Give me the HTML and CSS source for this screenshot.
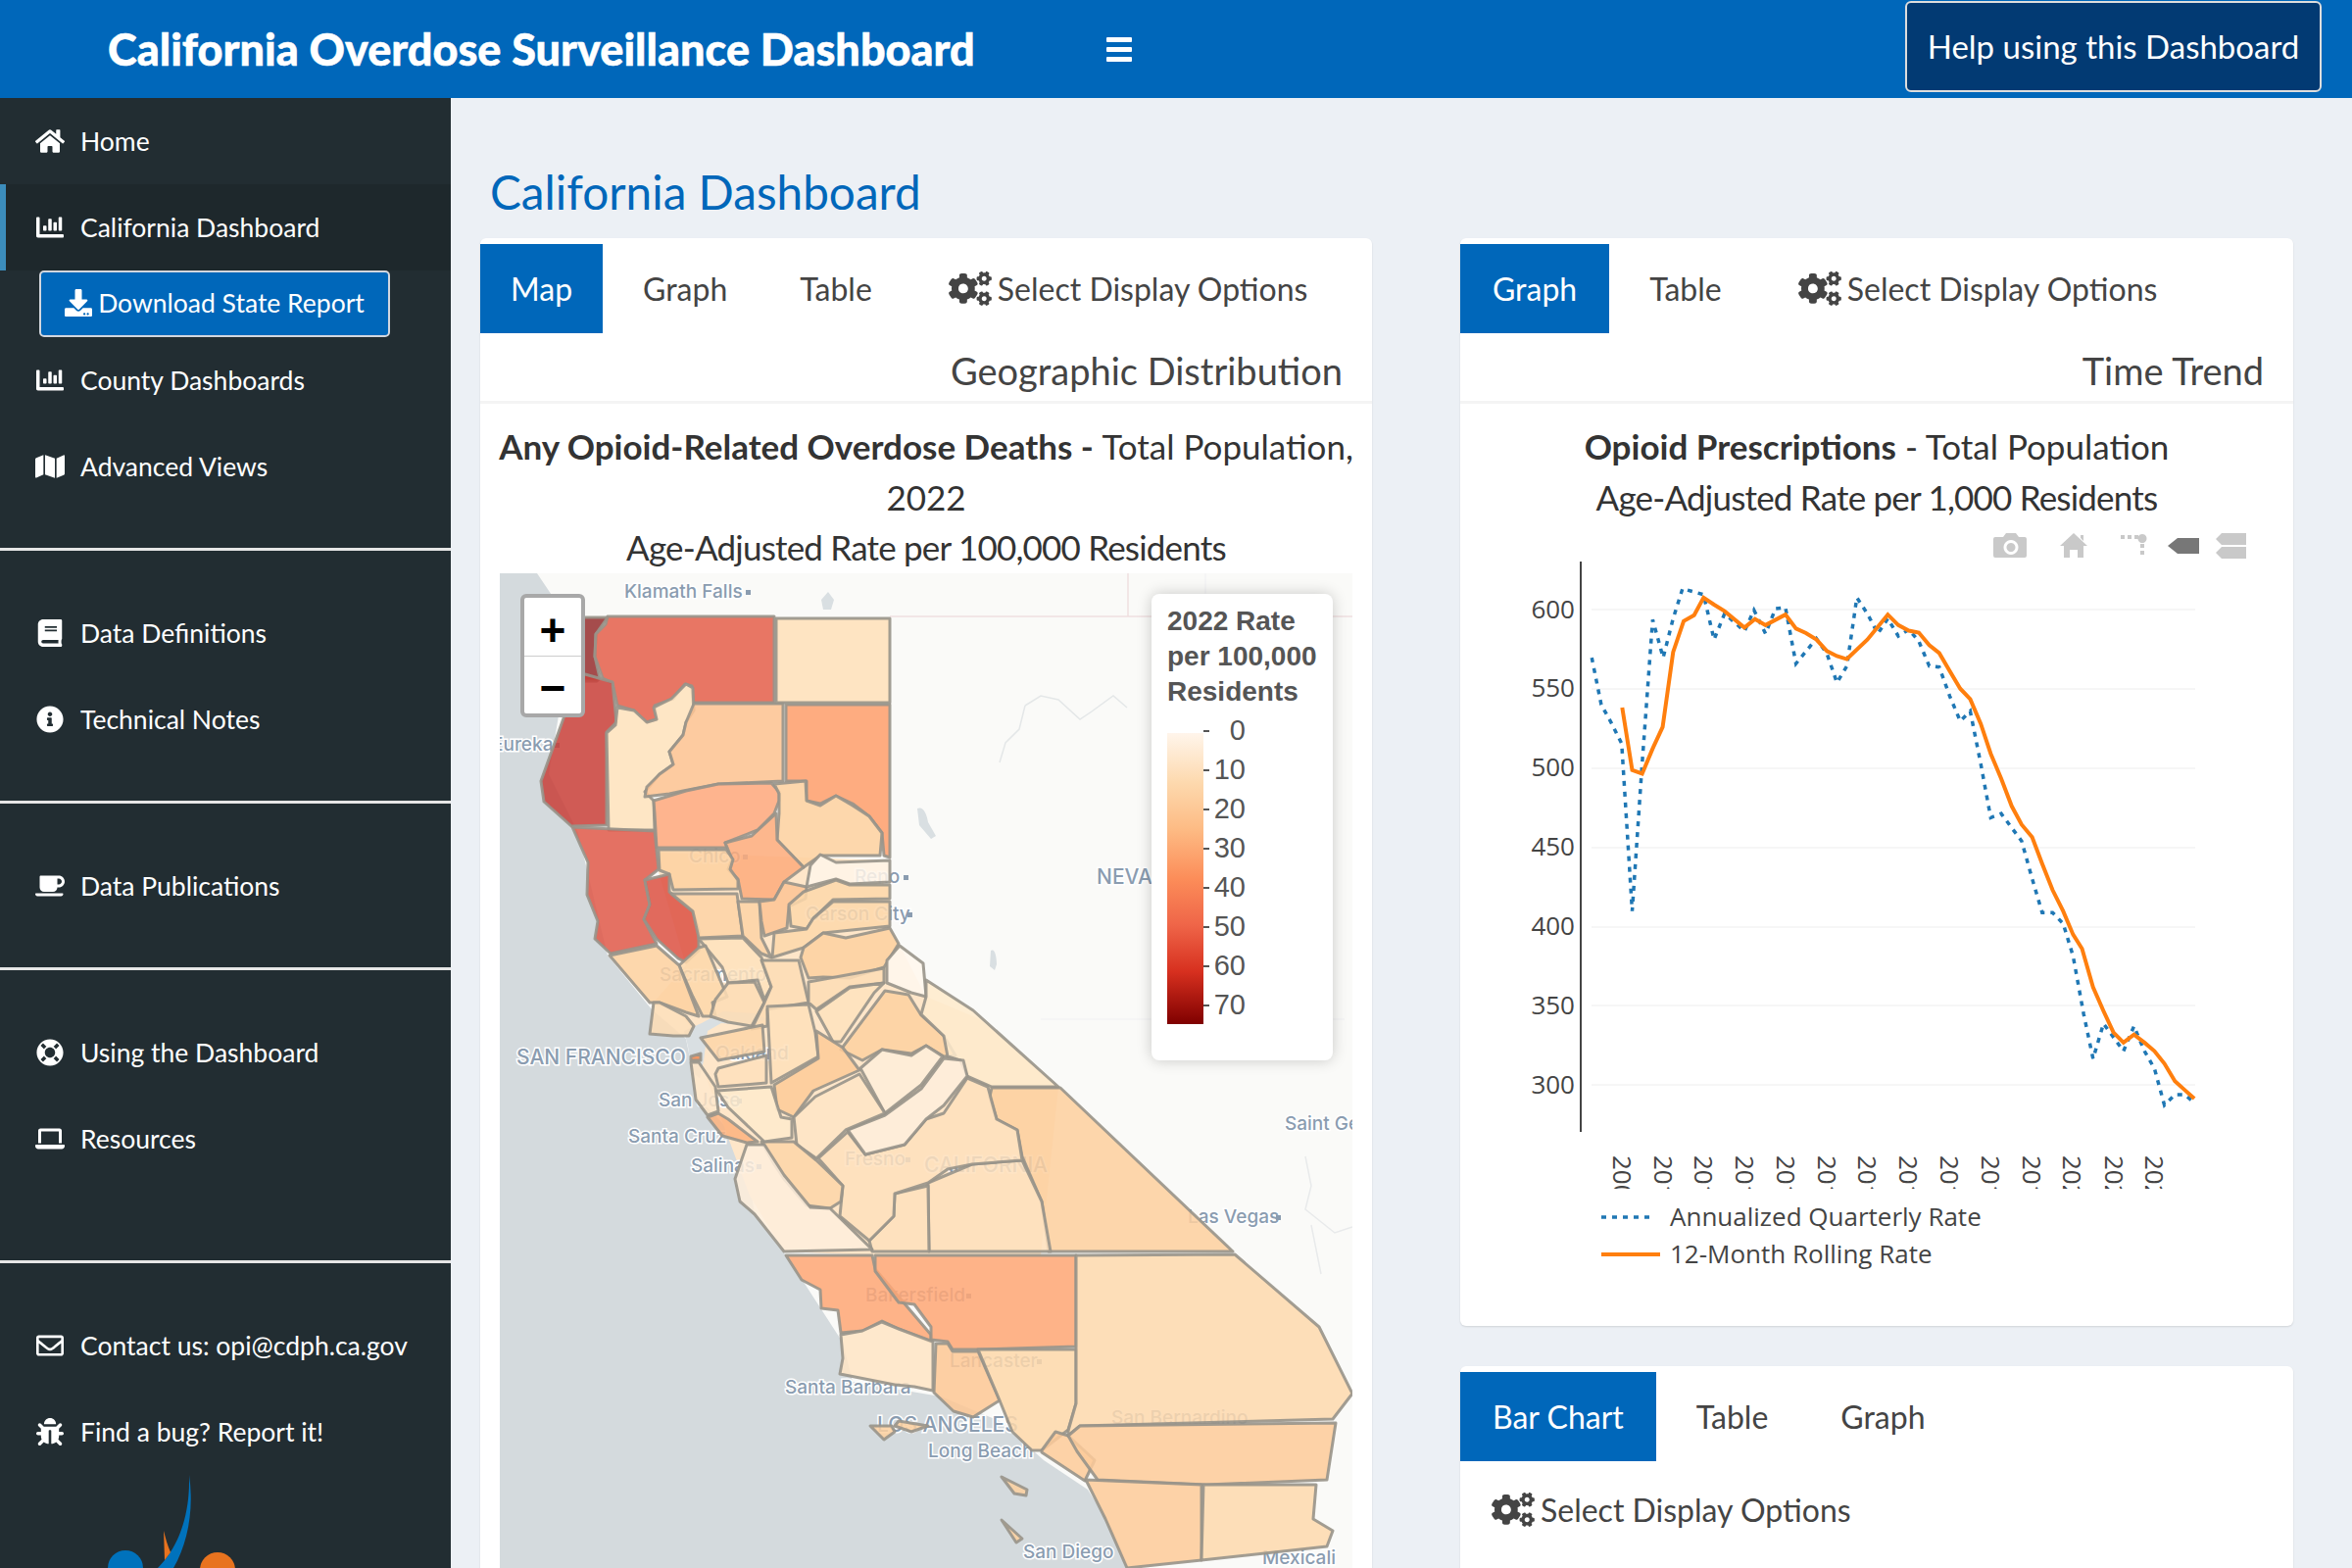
FILE: index.html
```html
<!DOCTYPE html>
<html lang="en">
<head>
    <meta charset="utf-8">
    <title>California Overdose Surveillance Dashboard</title>
    <link rel="stylesheet" href="styles.css">
</head>
<body>
    <svg class="icon-defs" xmlns="http://www.w3.org/2000/svg">
        <symbol id="i-home" viewBox="0 0 576 512"><path d="M280.37 148.26L96 300.11V464a16 16 0 0 0 16 16l112.06-.29a16 16 0 0 0 15.92-16V368a16 16 0 0 1 16-16h64a16 16 0 0 1 16 16v95.64a16 16 0 0 0 16 16.05L464 480a16 16 0 0 0 16-16V300L295.67 148.26a12.19 12.19 0 0 0-15.3 0zM571.6 251.47L488 182.56V44.05a12 12 0 0 0-12-12h-56a12 12 0 0 0-12 12v72.61L318.47 43a48 48 0 0 0-61 0L4.34 251.47a12 12 0 0 0-1.6 16.9l25.5 31A12 12 0 0 0 45.15 301l235.22-193.74a12.19 12.19 0 0 1 15.3 0L530.9 301a12 12 0 0 0 16.9-1.6l25.5-31a12 12 0 0 0-1.7-16.93z"/></symbol>
        <symbol id="i-chart" viewBox="0 0 512 512"><path d="M332.8 320h38.4c6.4 0 12.8-6.4 12.8-12.8V172.8c0-6.4-6.4-12.8-12.8-12.8h-38.4c-6.4 0-12.8 6.4-12.8 12.8v134.4c0 6.4 6.4 12.8 12.8 12.8zm96 0h38.4c6.4 0 12.8-6.4 12.8-12.8V76.8c0-6.4-6.4-12.8-12.8-12.8h-38.4c-6.4 0-12.8 6.4-12.8 12.8v230.4c0 6.4 6.4 12.8 12.8 12.8zm-288 0h38.4c6.4 0 12.8-6.4 12.8-12.8v-70.4c0-6.4-6.4-12.8-12.8-12.8h-38.4c-6.4 0-12.8 6.4-12.8 12.8v70.4c0 6.4 6.4 12.8 12.8 12.8zm96 0h38.4c6.4 0 12.8-6.4 12.8-12.8V108.8c0-6.4-6.4-12.8-12.8-12.8h-38.4c-6.4 0-12.8 6.4-12.8 12.8v198.4c0 6.4 6.4 12.8 12.8 12.8zM496 384H64V80c0-8.84-7.16-16-16-16H16C7.16 64 0 71.16 0 80v336c0 17.67 14.33 32 32 32h464c8.84 0 16-7.16 16-16v-32c0-8.84-7.16-16-16-16z"/></symbol>
        <symbol id="i-download" viewBox="0 0 512 512"><path d="M216 0h80c13.3 0 24 10.7 24 24v168h87.7c17.8 0 26.7 21.5 14.1 34.1L269.7 378.3c-7.5 7.5-19.8 7.5-27.3 0L90.1 226.1c-12.6-12.6-3.7-34.1 14.1-34.1H192V24c0-13.3 10.7-24 24-24zm296 376v112c0 13.3-10.7 24-24 24H24c-13.3 0-24-10.7-24-24V376c0-13.3 10.7-24 24-24h146.7l49 49c20.1 20.1 52.5 20.1 72.6 0l49-49H488c13.3 0 24 10.7 24 24zm-124 88c0-11-9-20-20-20s-20 9-20 20 9 20 20 20 20-9 20-20zm64 0c0-11-9-20-20-20s-20 9-20 20 9 20 20 20 20-9 20-20z"/></symbol>
        <symbol id="i-map" viewBox="0 0 576 512"><path d="M0 117.66v346.32c0 11.32 11.43 19.06 21.94 14.86L160 416V32L20.12 87.95A32.006 32.006 0 0 0 0 117.66zM192 416l192 64V96L192 32v384zM554.06 33.16L416 96v384l139.88-55.95A31.996 31.996 0 0 0 576 394.34V48.02c0-11.32-11.43-19.06-21.94-14.86z"/></symbol>
        <symbol id="i-book" viewBox="0 0 448 512"><path d="M448 360V24c0-13.3-10.7-24-24-24H96C43 0 0 43 0 96v320c0 53 43 96 96 96h328c13.3 0 24-10.7 24-24v-16c0-7.5-3.5-14.3-8.9-18.7-4.2-15.4-4.2-59.3 0-74.7 5.4-4.3 8.9-11.1 8.9-18.6zM128 134c0-3.3 2.7-6 6-6h212c3.3 0 6 2.7 6 6v20c0 3.3-2.7 6-6 6H134c-3.3 0-6-2.7-6-6v-20zm0 64c0-3.3 2.7-6 6-6h212c3.3 0 6 2.7 6 6v20c0 3.3-2.7 6-6 6H134c-3.3 0-6-2.7-6-6v-20zm253.4 250H96c-17.7 0-32-14.3-32-32 0-17.6 14.4-32 32-32h285.4c-1.9 17.1-1.9 46.9 0 64z"/></symbol>
        <symbol id="i-info" viewBox="0 0 512 512"><path d="M256 8C119.043 8 8 119.083 8 256c0 136.997 111.043 248 248 248s248-111.003 248-248C504 119.083 392.957 8 256 8zm0 110c23.196 0 42 18.804 42 42s-18.804 42-42 42-42-18.804-42-42 18.804-42 42-42zm56 254c0 6.627-5.373 12-12 12h-88c-6.627 0-12-5.373-12-12v-24c0-6.627 5.373-12 12-12h12v-64h-12c-6.627 0-12-5.373-12-12v-24c0-6.627 5.373-12 12-12h64c6.627 0 12 5.373 12 12v100h12c6.627 0 12 5.373 12 12v24z"/></symbol>
        <symbol id="i-coffee" viewBox="0 0 640 512"><path d="M192 384h192c53 0 96-43 96-96h32c70.6 0 128-57.4 128-128S582.6 32 512 32H120c-13.3 0-24 10.7-24 24v232c0 53 43 96 96 96zM512 96c35.3 0 64 28.7 64 64s-28.7 64-64 64h-32V96h32zm47.7 384H48.3c-47.6 0-61-64-36-64h583.3c25 0 11.8 64-35.9 64z"/></symbol>
        <symbol id="i-lifering" viewBox="0 0 512 512"><path d="M256 8C119 8 8 119 8 256s111 248 248 248 248-111 248-248S393 8 256 8zm173.696 119.559l-63.399 63.399c-10.987-18.559-26.67-34.252-45.255-45.255l63.399-63.399a218.396 218.396 0 0 1 45.255 45.255zM256 352c-53.019 0-96-42.981-96-96s42.981-96 96-96 96 42.981 96 96-42.981 96-96 96zM127.559 82.304l63.399 63.399c-18.559 10.987-34.252 26.67-45.255 45.255l-63.399-63.399a218.372 218.372 0 0 1 45.255-45.255zM82.304 384.441l63.399-63.399c10.987 18.559 26.67 34.252 45.255 45.255l-63.399 63.399a218.396 218.396 0 0 1-45.255-45.255zm302.137 45.255l-63.399-63.399c18.559-10.987 34.252-26.67 45.255-45.255l63.399 63.399a218.403 218.403 0 0 1-45.255 45.255z"/></symbol>
        <symbol id="i-laptop" viewBox="0 0 640 512"><path d="M128 96h384v256h64V80c0-26.51-21.49-48-48-48H112c-26.51 0-48 21.49-48 48v272h64V96zm496 288H16c-8.8 0-16 7.2-16 16v16c0 35.2 28.8 64 64 64h512c35.2 0 64-28.8 64-64v-16c0-8.8-7.2-16-16-16z"/></symbol>
        <symbol id="i-envelope" viewBox="0 0 512 512"><path d="M464 64H48C21.49 64 0 85.49 0 112v288c0 26.51 21.49 48 48 48h416c26.51 0 48-21.49 48-48V112c0-26.51-21.49-48-48-48zm0 48v40.805c-22.422 18.259-58.168 46.651-134.587 106.49-16.841 13.247-50.201 45.072-73.413 44.701-23.208.375-56.579-31.459-73.413-44.701C106.18 199.465 70.425 171.067 48 152.805V112h416zM48 400V214.398c22.914 18.251 55.409 43.862 104.938 82.646 21.857 17.205 60.134 55.186 103.062 54.955 42.717.231 80.509-37.199 103.053-54.947 49.528-38.783 82.032-64.401 104.947-82.653V400H48z"/></symbol>
        <symbol id="i-bug" viewBox="0 0 512 512"><path d="M511.988 288.9c-.478 17.43-15.217 31.1-32.653 31.1H424v16c0 21.864-4.882 42.584-13.6 61.145l60.228 60.228c12.496 12.497 12.496 32.758 0 45.255-12.498 12.497-32.759 12.496-45.256 0l-54.736-54.736C345.886 467.965 314.351 480 280 480V236c0-6.627-5.373-12-12-12h-24c-6.627 0-12 5.373-12 12v244c-34.351 0-65.886-12.035-90.636-32.108l-54.736 54.736c-12.498 12.497-32.759 12.496-45.256 0-12.496-12.497-12.496-32.758 0-45.255l60.228-60.228C92.882 378.584 88 357.864 88 336v-16H32.666C15.23 320 .491 306.33.013 288.9-.484 270.816 14.028 256 32 256h56v-58.745l-46.628-46.628c-12.496-12.497-12.496-32.758 0-45.255 12.498-12.497 32.758-12.497 45.256 0L141.255 160h229.489l54.627-54.627c12.498-12.497 32.758-12.497 45.256 0 12.496 12.497 12.496 32.758 0 45.255L424 197.255V256h56c17.972 0 32.484 14.816 31.988 32.9zM257 0c-61.856 0-112 50.144-112 112h224C369 50.144 318.856 0 257 0z"/></symbol>
        <symbol id="i-cogs" viewBox="0 0 640 512"><path d="M512.1 191l-8.2 14.3c-3 5.3-9.4 7.5-15.1 5.4-11.8-4.4-22.6-10.7-32.1-18.6-4.6-3.8-5.8-10.5-2.8-15.7l8.2-14.3c-6.9-8-12.3-17.3-15.9-27.4h-16.5c-6 0-11.2-4.3-12.2-10.3-2-12-2.1-24.6 0-37.1 1-6 6.2-10.4 12.2-10.4h16.5c3.6-10.1 9-19.4 15.9-27.4l-8.2-14.3c-3-5.2-1.9-11.9 2.8-15.7 9.5-7.9 20.4-14.2 32.1-18.6 5.7-2.1 12.1.1 15.1 5.4l8.2 14.3c10.5-1.9 21.2-1.9 31.7 0L552 6.3c3-5.3 9.4-7.5 15.1-5.4 11.8 4.4 22.6 10.7 32.1 18.6 4.6 3.8 5.8 10.5 2.8 15.7l-8.2 14.3c6.9 8 12.3 17.3 15.9 27.4h16.5c6 0 11.2 4.3 12.2 10.3 2 12 2.1 24.6 0 37.1-1 6-6.2 10.4-12.2 10.4h-16.5c-3.6 10.1-9 19.4-15.9 27.4l8.2 14.3c3 5.2 1.9 11.9-2.8 15.7-9.5 7.9-20.4 14.2-32.1 18.6-5.7 2.1-12.1-.1-15.1-5.4l-8.2-14.3c-10.4 1.9-21.2 1.9-31.7 0zm-10.5-58.8c38.5 29.6 82.4-14.3 52.8-52.8-38.5-29.7-82.4 14.3-52.8 52.8zM386.3 286.1l33.7 16.8c10.1 5.8 14.5 18.1 10.5 29.1-8.9 24.2-26.4 46.4-42.6 65.8-7.4 8.9-20.2 11.1-30.3 5.3l-29.1-16.8c-16 13.7-34.6 24.6-54.9 31.7v33.6c0 11.6-8.3 21.6-19.7 23.6-24.6 4.2-50.4 4.4-75.9 0-11.5-2-20-11.9-20-23.6V418c-20.3-7.2-38.9-18-54.9-31.7L74 403c-10 5.8-22.9 3.6-30.3-5.3-16.2-19.4-33.3-41.6-42.2-65.7-4-10.9.4-23.2 10.5-29.1l33.3-16.8c-3.9-20.9-3.9-42.4 0-63.4L12 205.8c-10.1-5.8-14.6-18.1-10.5-29 8.9-24.2 26-46.4 42.2-65.8 7.4-8.9 20.2-11.1 30.3-5.3l29.1 16.8c16-13.7 34.6-24.6 54.9-31.7V57.1c0-11.5 8.2-21.5 19.6-23.5 24.6-4.2 50.5-4.4 76-.1 11.5 2 20 11.9 20 23.6v33.6c20.3 7.2 38.9 18 54.9 31.7l29.1-16.8c10-5.8 22.9-3.6 30.3 5.3 16.2 19.4 33.2 41.6 42.1 65.8 4 10.9.1 23.2-10 29.1l-33.7 16.8c3.9 21 3.9 42.5 0 63.5zm-117.6 21.1c59.2-77-28.7-164.9-105.7-105.7-59.2 77 28.7 164.9 105.7 105.7zm243.4 182.7l-8.2 14.3c-3 5.3-9.4 7.5-15.1 5.4-11.8-4.4-22.6-10.7-32.1-18.6-4.6-3.8-5.8-10.5-2.8-15.7l8.2-14.3c-6.9-8-12.3-17.3-15.9-27.4h-16.5c-6 0-11.2-4.3-12.2-10.3-2-12-2.1-24.6 0-37.1 1-6 6.2-10.4 12.2-10.4h16.5c3.6-10.1 9-19.4 15.9-27.4l-8.2-14.3c-3-5.2-1.9-11.9 2.8-15.7 9.5-7.9 20.4-14.2 32.1-18.6 5.7-2.1 12.1.1 15.1 5.4l8.2 14.3c10.5-1.9 21.2-1.9 31.7 0l8.2-14.3c3-5.3 9.4-7.5 15.1-5.4 11.8 4.4 22.6 10.7 32.1 18.6 4.6 3.8 5.8 10.5 2.8 15.7l-8.2 14.3c6.9 8 12.3 17.3 15.9 27.4h16.5c6 0 11.2 4.3 12.2 10.3 2 12 2.1 24.6 0 37.1-1 6-6.2 10.4-12.2 10.4h-16.5c-3.6 10.1-9 19.4-15.9 27.4l8.2 14.3c3 5.2 1.9 11.9-2.8 15.7-9.5 7.9-20.4 14.2-32.1 18.6-5.7 2.1-12.1-.1-15.1-5.4l-8.2-14.3c-10.4 1.9-21.2 1.9-31.7 0zM501.6 431c38.5 29.6 82.4-14.3 52.8-52.8-38.5-29.6-82.4 14.3-52.8 52.8z"/></symbol>
    </svg>

    <header class="topbar">
        <div class="brand">California Overdose Surveillance Dashboard</div>
        <a class="burger"><span></span><span></span><span></span></a>
        <a class="help-btn">Help using this Dashboard</a>
    </header>

    <div class="wrapper">
        <aside class="sidebar">
            <a class="nav-item"><svg class="nav-icon"><use href="#i-home"/></svg>Home</a>
            <a class="nav-item active"><svg class="nav-icon"><use href="#i-chart"/></svg>California Dashboard</a>
            <a class="report-btn"><svg class="report-icon"><use href="#i-download"/></svg>Download State Report</a>
            <a class="nav-item"><svg class="nav-icon"><use href="#i-chart"/></svg>County Dashboards</a>
            <a class="nav-item"><svg class="nav-icon"><use href="#i-map"/></svg>Advanced Views</a>
            <hr class="nav-rule">
            <a class="nav-item"><svg class="nav-icon"><use href="#i-book"/></svg>Data Definitions</a>
            <a class="nav-item"><svg class="nav-icon"><use href="#i-info"/></svg>Technical Notes</a>
            <hr class="nav-rule">
            <a class="nav-item"><svg class="nav-icon"><use href="#i-coffee"/></svg>Data Publications</a>
            <hr class="nav-rule">
            <a class="nav-item"><svg class="nav-icon"><use href="#i-lifering"/></svg>Using the Dashboard</a>
            <a class="nav-item"><svg class="nav-icon"><use href="#i-laptop"/></svg>Resources</a>
            <hr class="nav-rule nav-rule-wide">
            <a class="nav-item"><svg class="nav-icon"><use href="#i-envelope"/></svg>Contact us: opi@cdph.ca.gov</a>
            <a class="nav-item"><svg class="nav-icon"><use href="#i-bug"/></svg>Find a bug? Report it!</a>
            <svg class="side-logo" viewBox="60 0 200 95">
                <path fill="#0072bc" d="M193 0c1 38-9 72-32 95h16c15-26 21-60 16-95z"/>
                <path fill="#e8731f" d="M167 57l1 30 6-8c-3-7-5-14-7-22z"/>
                <circle fill="#0072bc" cx="128" cy="95" r="18"/>
                <circle fill="#e8731f" cx="222" cy="97" r="18"/>
            </svg>
        </aside>

        <main class="content">
            <h1 class="page-title">California Dashboard</h1>
            <div class="columns">
                <section class="card card-map">
                    <nav class="tabs">
                        <a class="tab selected tab-short">Map</a>
                        <a class="tab">Graph</a>
                        <a class="tab">Table</a>
                        <a class="tab tab-options"><svg class="cogs"><use href="#i-cogs"/></svg>Select Display Options</a>
                    </nav>
                    <div class="card-head">Geographic Distribution</div>
                    <h3 class="chart-title"><b>Any Opioid-Related Overdose Deaths - </b>Total Population, 2022<br><span class="sub-line">Age-Adjusted Rate per 100,000 Residents</span></h3>
                    <div class="map">
                        <svg class="map-svg" viewBox="510 585 870 1015">
                            <rect class="land" x="510" y="585" width="870" height="1015"/>
                            <path class="ocean" d="M510 585H548L585 640 560 790 590 850 620 975 665 1030 700 1060 712 1120 760 1170 770 1240 805 1285 860 1370 870 1410 960 1425 1020 1450 1065 1490 1110 1520 1135 1560 1152 1600H510Z"/>
                            <path class="water" d="M936 825c6-3 10 6 11 14l8 14-5 3-12-14zM1011 970c4-3 6 6 6 14l-2 6-5-4zM838 612l7-8 6 8-3 10-8 0z"/>
                            <g class="geo-lines">
                                <path d="M908 629H1380M1151 585V629" stroke="#f0dfdf"/>
                                <path d="M1046 720l16-10 18 4 22 20 12-8 22-16 14 12M1046 720l-6 24-14 14-6 20" stroke="#e4e7e8"/>
                                <path d="M1332 1180l6 30-6 24 30 24 18-6M1338 1250l10 50" stroke="#e8eaeb"/>
                                <path d="M1230 585v400M1062 1040h310" stroke="#f4f4f3"/>
                            </g>
                            <polygon class="state-base" points="672,870 908,878 908,950 917,963 945,1017 1000,1040 1080,1109 1062,1281 890,1281 800,1277 765,1220 733,1134 716,1086 716,1060 690,1030 665,1025 700,985 672,890"/>
                            <path class="water" d="M716 1044l22-12 32 2 12 6-20 6-26-2-14 8-4 30-4 18-8-6-4-26-4-16z"/>
                            <g class="labels">
                                <text x="637" y="610">Klamath Falls</text><rect x="761" y="602" width="5" height="5"/>
                                <text x="502" y="766">Eureka</text><rect x="566" y="758" width="5" height="5"/>
                                <text x="703" y="880">Chico</text><rect x="758" y="872" width="5" height="5"/>
                                <text x="872" y="901">Reno</text><rect x="922" y="893" width="5" height="5"/>
                                <text x="822" y="939">Carson City</text><rect x="926" y="931" width="5" height="5"/>
                                <text x="673" y="1001">Sacramento</text>
                                <text class="city-lg" x="527" y="1086">SAN FRANCISCO</text>
                                <text x="730" y="1081">Oakland</text>
                                <text x="672" y="1129">San Jose</text><rect x="752" y="1121" width="5" height="5"/>
                                <text x="641" y="1166">Santa Cruz</text>
                                <text x="705" y="1196">Salinas</text><rect x="772" y="1188" width="5" height="5"/>
                                <text x="862" y="1189">Fresno</text><rect x="924" y="1181" width="5" height="5"/>
                                <text class="city-lg" x="943" y="1196">CALIFORNIA</text>
                                <text class="city-lg" x="1119" y="902">NEVADA</text>
                                <text class="city-faint" x="1293" y="931">Ely</text>
                                <text x="1311" y="1153">Saint George</text>
                                <text x="1212" y="1248">Las Vegas</text><rect x="1302" y="1240" width="5" height="5"/>
                                <text x="883" y="1328">Bakersfield</text><rect x="986" y="1320" width="5" height="5"/>
                                <text x="969" y="1395">Lancaster</text><rect x="1058" y="1387" width="5" height="5"/>
                                <text x="801" y="1422">Santa Barbara</text>
                                <text class="city-lg" x="895" y="1461">LOS ANGELES</text>
                                <text x="947" y="1487">Long Beach</text>
                                <text x="1134" y="1453">San Bernardino</text>
                                <text x="1044" y="1590">San Diego</text>
                                <text x="1288" y="1596">Mexicali</text>
                            </g>
                            <g class="counties">
                                <polygon fill="#962f30" points="570,630 620,630 608,647 607,670 612,692 609,695 590,695 570,690"/>
                                <polygon fill="#e4604c" points="620,629 790,629 790,717 707,717 706,700 699,698 693,705 687,713 668,720 670,734 660,737 647,725 630,720 625,697 615,692 607,670 608,647 618,637"/>
                                <polygon fill="#c8403a" points="597,688 625,696 629,737 619,747 619,842 583,843 555,818 552,797 575,733 590,690"/>
                                <polygon fill="#fee2bd" points="630,722 647,725 660,737 670,734 667,722 685,713 700,698 707,702 708,725 700,737 697,750 683,767 687,780 673,790 658,808 667,817 668,847 621,847 619,748 628,740"/>
                                <polygon fill="#fdc391" points="708,718 799,718 799,797 733,800 697,807 683,810 658,813 660,803 673,790 687,780 683,767 697,750 700,737"/>
                                <polygon fill="#fee0b9" points="792,631 908,631 908,717 792,717"/>
                                <polygon fill="#fe9e6c" points="802,719 908,719 908,875 902,873 900,850 887,833 870,820 853,812 837,820 823,817 823,797 802,797"/>
                                <polygon fill="#fea87d" points="667,817 700,807 733,800 787,799 795,808 795,817 790,830 773,847 740,860 742,865 670,865 668,830"/>
                                <polygon fill="#fdd09f" points="790,800 822,797 823,817 837,822 853,812 870,822 887,833 900,850 898,873 837,873 820,885 793,857 795,830 795,810"/>
                                <polygon fill="#fdab7c" points="792,830 793,857 820,885 800,900 790,918 757,917 753,897 743,887 747,877 740,860 767,853"/>
                                <polygon fill="#fdd09f" points="672,867 741,867 748,877 745,887 753,898 753,907 687,908 683,892 673,888"/>
                                <polygon fill="#df5a4a" points="584,844 668,848 672,887 658,898 663,923 657,938 670,963 623,973 607,958 610,940 599,913 600,880"/>
                                <polygon fill="#dc5143" points="658,898 683,892 683,910 707,930 713,950 713,970 700,982 692,978 670,958 657,938 663,923"/>
                                <polygon fill="#fdd3a5" points="685,912 752,912 758,955 713,957 707,930"/>
                                <polygon fill="#fdd3a5" points="753,920 775,920 777,957 787,977 777,973 758,955"/>
                                <polygon fill="#fdc494" points="775,920 790,918 800,900 823,905 822,917 805,925 803,947 780,955 777,940"/>
                                <polygon fill="#fff5e8" points="827,883 837,872 853,880 908,878 908,900 867,902 853,897 823,905"/>
                                <polygon fill="#fdd7aa" points="853,898 867,903 908,903 908,917 850,918 830,937 823,948 807,945 805,923 820,910"/>
                                <polygon fill="#fdd7aa" points="850,920 908,920 908,945 840,952 820,967 788,977 790,952 823,948 830,937"/>
                                <polygon fill="#fdd09f" points="820,967 840,952 863,957 908,947 917,963 902,987 867,998 840,997 825,998 817,977"/>
                                <polygon fill="#fee2bd" points="713,958 758,957 777,977 787,1007 780,1020 773,1000 743,1003 737,987"/>
                                <polygon fill="#fdd7aa" points="693,985 713,967 720,965 742,1017 727,1023 730,1037 717,1037 707,1017"/>
                                <polygon fill="#fdd09f" points="622,975 670,965 693,985 713,1037 700,1033 673,1023 663,1023"/>
                                <polygon fill="#fddcb4" points="667,1023 673,1023 700,1037 708,1047 703,1057 687,1057 663,1055"/>
                                <polygon fill="#fddcb4" points="730,1020 743,1003 770,1002 780,1023 767,1047 743,1043 725,1037"/>
                                <polygon fill="#fddcb4" points="777,980 815,980 825,1023 783,1030 783,1047 767,1050 780,1023 787,1007"/>
                                <polygon fill="#fddcb4" points="825,1002 902,988 902,1003 867,1007 833,1030 825,1023"/>
                                <polygon fill="#fff7ee" points="905,980 918,965 942,983 945,1017 930,1013 905,1003"/>
                                <polygon fill="#fee2bd" points="833,1032 867,1008 902,1003 892,1013 858,1063 850,1063"/>
                                <polygon fill="#fee0b9" points="783,1027 825,1025 832,1054 835,1078 787,1105"/>
                                <polygon fill="#fdd09f" points="858,1071 903,1011 927,1015 940,1036 963,1057 975,1077 963,1078 945,1067 930,1075 900,1071 880,1082"/>
                                <polygon fill="#fdcb97" points="833,1052 860,1069 877,1092 830,1113 810,1140 793,1132 790,1107 835,1080"/>
                                <polygon fill="#feedd8" points="878,1090 900,1071 930,1077 945,1067 962,1078 940,1107 903,1136"/>
                                <polygon fill="#feeacc" points="945,1000 993,1031 1080,1109 1012,1109 987,1098 980,1082 967,1078 963,1057 940,1035 945,1017"/>
                                <polygon fill="#fdcf9e" points="1012,1110 1082,1110 1258,1277 1070,1277 1063,1226 1043,1180 1038,1153 1017,1142 1010,1119"/>
                                <polygon fill="#fee0bb" points="947,1207 992,1188 1043,1184 1063,1226 1072,1277 948,1277"/>
                                <polygon fill="#fee0bb" points="913,1218 947,1210 948,1277 890,1277 887,1266 912,1241"/>
                                <polygon fill="#fee0bb" points="835,1182 865,1155 883,1178 923,1168 945,1142 963,1136 987,1100 1008,1109 1017,1142 1038,1153 1043,1184 992,1188 967,1193 947,1207 913,1218 912,1241 887,1266 857,1241 860,1210"/>
                                <polygon fill="#feeedb" points="865,1153 903,1138 940,1111 963,1080 983,1082 987,1098 963,1128 945,1142 923,1168 883,1178"/>
                                <polygon fill="#fee4c5" points="810,1140 832,1119 877,1096 903,1136 863,1153 833,1182 813,1168"/>
                                <polygon fill="#fdd5a8" points="777,1165 810,1165 833,1184 860,1210 858,1226 847,1233 823,1230 800,1203 790,1188"/>
                                <polygon fill="#feeacc" points="732,1113 787,1109 797,1140 808,1142 808,1161 780,1165 743,1130"/>
                                <polygon fill="#fdb27e" points="722,1140 733,1136 743,1142 773,1165 762,1166 737,1159"/>
                                <polygon fill="#feeedb" points="762,1168 780,1168 800,1199 827,1232 847,1233 890,1275 800,1277 770,1239 755,1226 750,1203"/>
                                <polygon fill="#fee0bb" points="733,1090 782,1077 782,1105 733,1109 730,1096"/>
                                <polygon fill="#fdd5a8" points="715,1059 778,1046 780,1073 733,1082"/>
                                <polygon fill="#f98a4e" points="705,1078 715,1075 715,1082 705,1082"/>
                                <polygon fill="#fee4c5" points="705,1084 713,1084 730,1109 733,1134 722,1138 710,1122"/>
                                <polygon fill="#fea676" points="802,1281 890,1281 893,1295 950,1362 950,1369 917,1356 900,1348 880,1358 858,1360 855,1337 838,1335 837,1316 818,1306"/>
                                <polygon fill="#fea676" points="893,1281 1098,1281 1098,1374 998,1377 972,1377 967,1369 950,1367 950,1354 933,1331 917,1329 893,1297"/>
                                <polygon fill="#fee4c5" points="858,1362 880,1358 900,1349 917,1356 952,1369 952,1419 933,1415 913,1413 857,1402 860,1386"/>
                                <polygon fill="#fdc795" points="955,1371 967,1371 972,1379 998,1379 1020,1429 993,1446 973,1440 953,1421"/>
                                <polygon fill="#fdd7aa" points="998,1377 1098,1377 1098,1432 1090,1459 1063,1480 1053,1480 1033,1461 1020,1429"/>
                                <polygon fill="#fdcb9a" points="1063,1480 1077,1461 1090,1465 1117,1490 1107,1511 1063,1482"/>
                                <polygon fill="#fdd9ae" points="1098,1281 1260,1280 1346,1354 1380,1422 1360,1448 1102,1455 1090,1465 1090,1460 1098,1432"/>
                                <polygon fill="#fdcb9a" points="1102,1455 1363,1452 1354,1510 1231,1515 1120,1510 1099,1481 1090,1465"/>
                                <polygon fill="#fdcb9a" points="1108,1510 1226,1515 1226,1592 1150,1600 1128,1550"/>
                                <polygon fill="#fdd9ae" points="1228,1515 1343,1515 1340,1550 1360,1562 1354,1578 1226,1592"/>
                                <polygon fill="#fdd09f" points="888,1455 910,1455 913,1461 902,1469"/>
                                <polygon fill="#fdd09f" points="917,1450 947,1455 930,1461 913,1455"/>
                                <polygon fill="#fdd09f" points="1022,1507 1048,1520 1047,1526 1035,1524"/>
                                <polygon fill="#fdd09f" points="1022,1551 1043,1570 1037,1574"/>
                            </g>
                        </svg>
                        <div class="zoom-ctl"><a class="zoom-btn">+</a><a class="zoom-btn">&#8722;</a></div>
                        <div class="legend">
                            <div class="legend-title">2022 Rate per 100,000 Residents</div>
                            <div class="legend-body">
                                <div class="legend-bar"></div>
                                <ul class="legend-ticks">
                                    <li>0</li><li>10</li><li>20</li><li>30</li><li>40</li><li>50</li><li>60</li><li>70</li>
                                </ul>
                            </div>
                        </div>
                    </div>
                </section>

                <div class="right-col">
                    <section class="card card-trend">
                        <nav class="tabs">
                            <a class="tab selected">Graph</a>
                            <a class="tab">Table</a>
                            <a class="tab tab-options"><svg class="cogs"><use href="#i-cogs"/></svg>Select Display Options</a>
                        </nav>
                        <div class="card-head">Time Trend</div>
                        <h3 class="chart-title"><b>Opioid Prescriptions</b> - Total Population<br><span class="sub-line">Age-Adjusted Rate per 1,000 Residents</span></h3>
                        <svg class="trend-svg" viewBox="1490 536 850 817">
                            <defs><clipPath id="tick-clip"><rect x="1620" y="1178" width="620" height="36"/></clipPath></defs>
                            <g class="modebar">
                                <path d="M2036 549h8l3-4h10l3 4h6a2 2 0 0 1 2 2v17a2 2 0 0 1-2 2h-30a2 2 0 0 1-2-2v-17a2 2 0 0 1 2-2zM2052 552a7.500 7.500 0 1 0 .01 0zM2052 555a4.500 4.500 0 1 1-.01 0z" fill-rule="evenodd"/>
                                <path d="M2116 545l14 13h-4v12h-6v-8h-8v8h-6v-12h-4zM2123 547h3v6l-3-3z"/>
                                <path d="M2164 547h4v4h-4zM2171 547h4v4h-4zM2178 547h4v4h-4zM2186 546a4.500 4.500 0 1 1-.01 0zM2184 556h4v4h-4zM2184 563h4v4h-4z"/>
                                <path class="on" d="M2212 558l10-8h22v16h-22z"/>
                                <path d="M2261 551l6-6h25v12h-25zM2261 565l6-6h25v12h-25z"/>
                            </g>
                            <g class="grid">
                                <path d="M1624 623H2240M1624 704H2240M1624 785H2240M1624 866H2240M1624 947H2240M1624 1027H2240M1624 1108H2240"/>
                            </g>
                            <path class="y-axis" d="M1613 574V1156"/>
                            <g class="y-labels">
                                <text x="1607" y="632">600</text><text x="1607" y="712">550</text><text x="1607" y="793">500</text><text x="1607" y="874">450</text><text x="1607" y="955">400</text><text x="1607" y="1036">350</text><text x="1607" y="1117">300</text>
                            </g>
                            <g class="x-labels" clip-path="url(#tick-clip)">
                                <text transform="translate(1646 1180) rotate(90)">2008</text>
                                <text transform="translate(1688 1180) rotate(90)">2010</text>
                                <text transform="translate(1729 1180) rotate(90)">2011</text>
                                <text transform="translate(1771 1180) rotate(90)">2012</text>
                                <text transform="translate(1813 1180) rotate(90)">2013</text>
                                <text transform="translate(1855 1180) rotate(90)">2014</text>
                                <text transform="translate(1896 1180) rotate(90)">2015</text>
                                <text transform="translate(1938 1180) rotate(90)">2016</text>
                                <text transform="translate(1980 1180) rotate(90)">2017</text>
                                <text transform="translate(2022 1180) rotate(90)">2018</text>
                                <text transform="translate(2064 1180) rotate(90)">2019</text>
                                <text transform="translate(2105 1180) rotate(90)">2020</text>
                                <text transform="translate(2148 1180) rotate(90)">2021</text>
                                <text transform="translate(2189 1180) rotate(90)">2022</text>
                            </g>
                            <g transform="translate(1500 520) scale(.5356 .5102)">
                                <polyline class="line-quarter" points="232,298 250,392 270,430 289,470 309,805 328,510 348,222 368,298 387,220 405,160 445,172 465,262 485,210 523,245 541,203 563,250 582,200 601,198 621,310 660,260 680,290 699,348 718,315 737,178 757,210 777,250 796,220 816,255 836,242 855,265 875,315 894,317 914,375 934,425 953,405 973,510 992,618 1012,610 1051,665 1071,740 1090,808 1110,808 1130,830 1149,895 1169,1010 1187,1100 1207,1030 1245,1085 1265,1035 1285,1085 1304,1120 1323,1193 1343,1172 1362,1172 1380,1188"/>
                                <polyline class="line-rolling" points="290,398 309,523 328,530 348,480 367,437 387,287 407,225 427,213 445,178 465,192 485,205 523,238 543,221 563,233 601,212 621,240 640,249 660,262 680,285 699,295 718,301 757,262 796,212 816,233 836,244 855,248 875,273 894,289 914,325 934,360 953,381 973,430 992,490 1012,540 1032,595 1051,632 1071,657 1090,710 1110,763 1130,805 1149,852 1166,880 1187,957 1207,1005 1226,1048 1245,1068 1265,1052 1285,1068 1304,1085 1323,1110 1343,1145 1362,1163 1380,1180"/>
                            </g>
                            <path class="line-quarter" d="M1634 1243H1689"/>
                            <path class="line-rolling" d="M1634 1281H1694"/>
                            <g class="chart-legend">
                                <text x="1704" y="1252">Annualized Quarterly Rate</text>
                                <text x="1704" y="1290">12-Month Rolling Rate</text>
                            </g>
                        </svg>
                    </section>

                    <section class="card card-bars">
                        <nav class="tabs">
                            <a class="tab selected">Bar Chart</a>
                            <a class="tab">Table</a>
                            <a class="tab">Graph</a>
                        </nav>
                        <div class="options-row"><svg class="cogs"><use href="#i-cogs"/></svg>Select Display Options</div>
                    </section>
                </div>
            </div>
        </main>
    </div>
</body>
</html>
```

FILE: styles.css
```css
html, body {
    margin: 0;
    height: 1600px;
    overflow: hidden;
    background: #ecf0f5;
    font-family: "Lato", "Noto Sans", sans-serif;
    color: #444;
}

.icon-defs {
    display: none;
}

a {
    color: inherit;
}

/* header */

.topbar {
    display: flex;
    align-items: center;
    height: 100px;
    background: #0067ba;
    color: #fff;
}

.brand {
    width: 1129px;
    padding-left: 110px;
    box-sizing: border-box;
    font-size: 45px;
    font-weight: 900;
    -webkit-text-stroke: .5px #fff;
    white-space: nowrap;
}

.burger {
    display: flex;
    flex-direction: column;
    gap: 5px;
    width: 26px;
}

.burger span {
    height: 5px;
    background: #fff;
    border-radius: 1px;
}

.help-btn {
    display: flex;
    align-items: center;
    justify-content: center;
    box-sizing: border-box;
    width: 425px;
    height: 93px;
    margin-left: auto;
    margin-right: 31px;
    margin-top: -6px;
    background: #023a73;
    border: 2px solid #ddd;
    border-radius: 6px;
    font-size: 33px;
}

.wrapper {
    display: flex;
    height: 1500px;
}

/* sidebar */

.sidebar {
    flex: 0 0 460px;
    background: #222d32;
    color: #fff;
    overflow: hidden;
}

.nav-item {
    display: flex;
    align-items: center;
    box-sizing: border-box;
    height: 88px;
    padding-left: 36px;
    padding-bottom: 1px;
    font-size: 26.500px;
}

.nav-item.active {
    padding-left: 30px;
    border-left: 6px solid #3c8dbc;
    background: #1e282c;
}

.nav-icon {
    flex: none;
    width: 30px;
    height: 28px;
    margin-right: 16px;
    fill: #fff;
}

.report-btn {
    display: flex;
    align-items: center;
    justify-content: center;
    box-sizing: border-box;
    width: 358px;
    height: 68px;
    margin-left: 40px;
    padding-bottom: 2px;
    background: #0067ba;
    border: 2px solid #d2d6de;
    border-radius: 5px;
    font-size: 26.500px;
}

.report-icon {
    width: 28px;
    height: 28px;
    margin-right: 6px;
    fill: #fff;
}

.nav-rule {
    height: 3px;
    margin: 39px 0 40px;
    border: 0;
    background: #e6e6e6;
}

.nav-rule-wide {
    margin-top: 80px;
}

.side-logo {
    display: block;
    width: 200px;
    height: 95px;
    margin-left: 60px;
}

/* content */

.content {
    flex: 1;
    min-width: 0;
    padding-left: 30px;
    padding-right: 60px;
}

.page-title {
    margin: 68px 0 0 10px;
    height: 75px;
    font-size: 47.700px;
    line-height: 56px;
    font-weight: 400;
    color: #0067ba;
}

.columns {
    display: flex;
    gap: 90px;
    align-items: flex-start;
}

.card {
    background: #fff;
    border-radius: 6px;
    box-shadow: 0 1px 2px rgba(0, 0, 0, .12);
}

.card-map {
    flex: 0 0 910px;
    height: 1400px;
}

.right-col {
    flex: 0 0 850px;
}

.card-trend {
    height: 1110px;
    margin-bottom: 41px;
}

.card-bars {
    height: 400px;
}

.tabs {
    display: flex;
    padding-top: 6px;
    height: 91px;
}

.tab {
    display: flex;
    align-items: center;
    padding: 0 33px;
    margin-right: 8px;
    font-size: 32px;
}

.tab.selected {
    background: #0067ba;
    color: #fff;
}

.tab-short {
    padding: 0 31px;
}

.tab-options {
    margin-left: 4px;
}

.cogs {
    width: 44px;
    height: 35px;
    margin-right: 6px;
    fill: #444;
}

.card-head {
    height: 69px;
    padding-right: 30px;
    border-bottom: 3px solid #f4f4f4;
    text-align: right;
    font-size: 38px;
    line-height: 76px;
}

.chart-title {
    margin: 18px 0 0;
    padding: 0 16px;
    font-size: 35px;
    line-height: 51.500px;
    font-weight: 400;
    text-align: center;
    color: #333;
}

.sub-line {
    letter-spacing: -.8px;
}

.card-trend .trend-svg {
    display: block;
    width: 850px;
    height: 817px;
    margin-top: 2px;
}

.options-row {
    display: flex;
    align-items: center;
    padding: 30px 32px;
    font-size: 32px;
}

/* map */

.map {
    position: relative;
    width: 870px;
    height: 1015px;
    margin: 0 0 0 20px;
    overflow: hidden;
}

.map-svg {
    display: block;
    width: 870px;
    height: 1015px;
}

.land {
    fill: #fafaf8;
}

.ocean {
    fill: #d4dadd;
}

.water {
    fill: #d9dfe2;
}

.state-base {
    fill: #fee6c9;
}

.geo-lines path {
    fill: none;
    stroke-width: 1.5;
}

.labels text {
    font-family: "Inter", sans-serif;
    font-size: 19px;
    font-weight: 500;
    fill: #8a9cb0;
    stroke: #fff;
    stroke-width: 3px;
    paint-order: stroke;
}

.labels .city-lg {
    font-size: 21px;
}

.labels .city-faint {
    opacity: .3;
}

.labels rect {
    fill: #8a9cb0;
}

.counties polygon {
    fill-opacity: .86;
    stroke: #98938a;
    stroke-opacity: .9;
    stroke-width: 3;
    stroke-linejoin: round;
}

.zoom-ctl {
    position: absolute;
    left: 21px;
    top: 21px;
    width: 58px;
    border: 4px solid #a8a8a8;
    border-radius: 6px;
    background: #fff;
}

.zoom-btn {
    display: flex;
    align-items: center;
    justify-content: center;
    box-sizing: border-box;
    height: 59px;
    padding-top: 7px;
    font-family: "Liberation Sans", sans-serif;
    font-size: 46px;
    font-weight: 700;
    color: #000;
}

.zoom-btn + .zoom-btn {
    border-top: 1px solid #ccc;
}

.legend {
    position: absolute;
    left: 665px;
    top: 21px;
    box-sizing: border-box;
    width: 185px;
    height: 476px;
    padding: 10px 16px;
    background: #fff;
    border-radius: 8px;
    box-shadow: 0 0 15px rgba(0, 0, 0, .2);
    font-family: "Liberation Sans", sans-serif;
    color: #555;
}

.legend-title {
    font-size: 28px;
    font-weight: 700;
    line-height: 36px;
}

.legend-body {
    display: flex;
    margin-top: 24px;
}

.legend-bar {
    width: 37px;
    height: 297px;
    background: linear-gradient(to bottom, #fff5eb, #fdd9ae 17%, #fdbb84 33%, #fc8d59 50%, #ef6548 66%, #d7301f 82%, #7f0000);
}

.legend-ticks {
    list-style: none;
    width: 43px;
    margin: -22px 0 0;
    padding: 0;
    font-size: 29px;
}

.legend-ticks li {
    display: flex;
    align-items: center;
    justify-content: flex-end;
    height: 40px;
}

.legend-ticks li::before {
    content: "";
    width: 6px;
    height: 2px;
    margin-right: auto;
    background: #555;
}

/* trend chart */

.modebar path {
    fill: #c9c9c9;
}

.modebar .on {
    fill: #777;
}

.grid path {
    fill: none;
    stroke: #f6f6f6;
    stroke-width: 2;
}

.y-axis {
    stroke: #444;
    stroke-width: 2;
    fill: none;
}

.y-labels text {
    font-family: "Open Sans", sans-serif;
    font-size: 26px;
    fill: #444;
    text-anchor: end;
}

.x-labels text {
    font-family: "Open Sans", sans-serif;
    font-size: 26px;
    fill: #444;
}

.line-quarter {
    fill: none;
    stroke: #1f77b4;
    stroke-width: 3.500;
    stroke-dasharray: 5 6;
    vector-effect: non-scaling-stroke;
}

.line-rolling {
    fill: none;
    stroke: #ff7f0e;
    stroke-width: 4;
    vector-effect: non-scaling-stroke;
}

.chart-legend text {
    font-family: "Open Sans", sans-serif;
    font-size: 26px;
    fill: #444;
}
```
